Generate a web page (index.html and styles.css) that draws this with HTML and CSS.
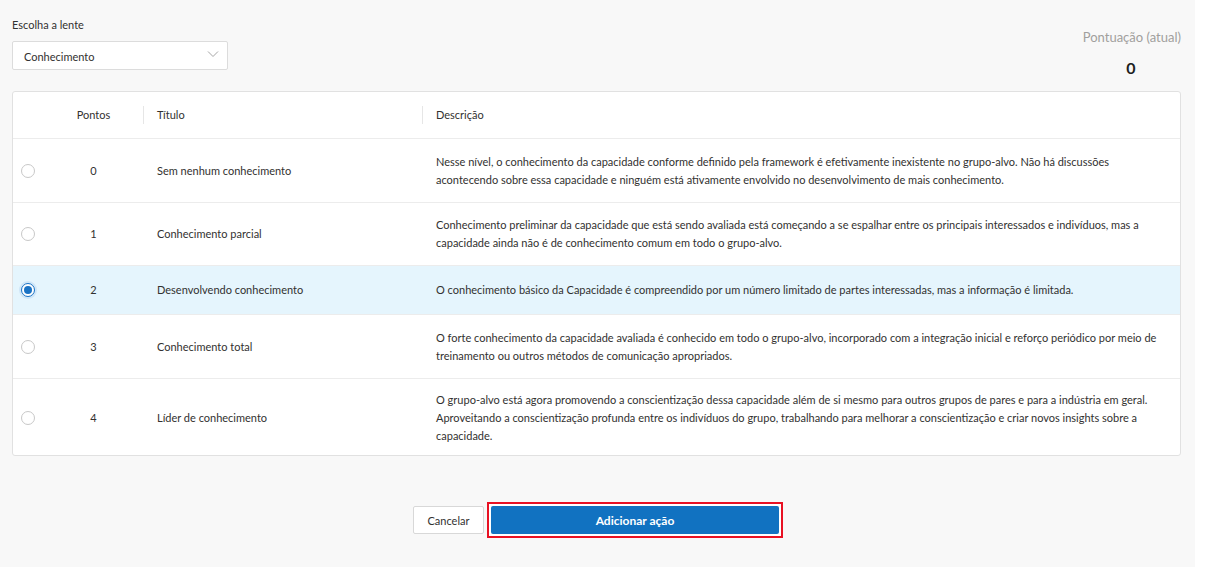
FILE: index.html
```html
<!DOCTYPE html>
<html>
<head>
	<meta charset="utf-8">
	<title>Escolha a lente</title>
	<link rel="stylesheet" href="styles.css">
</head>
<body>
	<div class="page">
		<div class="top">
			<div class="lens">
				<div class="lensLabel">Escolha a lente</div>
				<div class="select">
					<span>Conhecimento</span>
					<svg class="chev" width="12" height="8" viewBox="0 0 12 8"><path d="M1 1.5 L6 6.5 L11 1.5" fill="none" stroke="#a6a6a6" stroke-width="1"/></svg>
				</div>
			</div>
			<div class="score">
				<div class="scoreLabel">Pontuação (atual)</div>
				<div class="scoreValue">0</div>
			</div>
		</div>

		<div class="card">
			<table class="grid">
				<thead>
					<tr>
						<th class="colRadio"></th>
						<th class="colPts">Pontos</th>
						<th class="colTitle sep">Título</th>
						<th class="colDesc sep">Descrição</th>
					</tr>
				</thead>
				<tbody>
					<tr>
						<td class="colRadio"><span class="radio"></span></td>
						<td class="colPts">0</td>
						<td class="colTitle">Sem nenhum conhecimento</td>
						<td class="colDesc">Nesse nível, o conhecimento da capacidade conforme definido pela framework é efetivamente inexistente no grupo-alvo. Não há discussões<br>acontecendo sobre essa capacidade e ninguém está ativamente envolvido no desenvolvimento de mais conhecimento.</td>
					</tr>
					<tr class="r1">
						<td class="colRadio"><span class="radio"></span></td>
						<td class="colPts">1</td>
						<td class="colTitle">Conhecimento parcial</td>
						<td class="colDesc">Conhecimento preliminar da capacidade que está sendo avaliada está começando a se espalhar entre os principais interessados e indivíduos, mas a<br>capacidade ainda não é de conhecimento comum em todo o grupo-alvo.</td>
					</tr>
					<tr class="selected">
						<td class="colRadio"><span class="radio on"></span></td>
						<td class="colPts">2</td>
						<td class="colTitle">Desenvolvendo conhecimento</td>
						<td class="colDesc">O conhecimento básico da Capacidade é compreendido por um número limitado de partes interessadas, mas a informação é limitada.</td>
					</tr>
					<tr>
						<td class="colRadio"><span class="radio"></span></td>
						<td class="colPts">3</td>
						<td class="colTitle">Conhecimento total</td>
						<td class="colDesc">O forte conhecimento da capacidade avaliada é conhecido em todo o grupo-alvo, incorporado com a integração inicial e reforço periódico por meio de<br>treinamento ou outros métodos de comunicação apropriados.</td>
					</tr>
					<tr class="last">
						<td class="colRadio"><span class="radio"></span></td>
						<td class="colPts">4</td>
						<td class="colTitle">Líder de conhecimento</td>
						<td class="colDesc">O grupo-alvo está agora promovendo a conscientização dessa capacidade além de si mesmo para outros grupos de pares e para a indústria em geral.<br>Aproveitando a conscientização profunda entre os indivíduos do grupo, trabalhando para melhorar a conscientização e criar novos insights sobre a<br>capacidade.</td>
					</tr>
				</tbody>
			</table>
		</div>

		<div class="actions">
			<button class="btn cancel">Cancelar</button>
			<div class="highlight">
				<button class="btn primary">Adicionar ação</button>
			</div>
		</div>
	</div>
</body>
</html>
```

FILE: styles.css
```css
html, body {
	margin: 0;
	padding: 0;
	background: #fff;
}
body {
	font-family: Lato, "Open Sans", sans-serif;
	font-size: 11px;
	color: #323130;
}
.page {
	width: 1195px;
	height: 567px;
	background: #f8f8f8;
	padding: 0 14px 0 12px;
	box-sizing: border-box;
}
.top {
	display: flex;
	justify-content: space-between;
	align-items: flex-start;
	height: 91px;
}
.lensLabel {
	padding-top: 17px;
	line-height: 16px;
	height: 24px;
}
.select {
	display: flex;
	align-items: center;
	justify-content: space-between;
	width: 216px;
	height: 29px;
	box-sizing: border-box;
	padding: 1px 8px 0 11px;
	background: #fff;
	border: 1px solid #dcdcdc;
	border-radius: 2px;
}
.chev {
	margin-top: -4px;
}
.score {
	text-align: center;
	padding-top: 28px;
}
.scoreLabel {
	color: #a19f9d;
	font-size: 13px;
	line-height: 18px;
}
.scoreValue {
	margin-top: 12px;
	padding-right: 2px;
	font-size: 16px;
	font-weight: 700;
	line-height: 20px;
	color: #201f1e;
}
.card {
	background: #fff;
	border: 1px solid #e1e1e1;
	border-radius: 3px;
	height: 365px;
	box-sizing: border-box;
	overflow: hidden;
}
.grid {
	width: 100%;
	border-collapse: collapse;
	table-layout: fixed;
}
.grid th {
	height: 45px;
	line-height: 16px;
	padding: 0 0 1px;
	font-weight: normal;
	text-align: left;
	position: relative;
	border-bottom: 1px solid #ececec;
}
.grid th.sep::before {
	content: "";
	position: absolute;
	left: 0;
	top: 14px;
	bottom: 14px;
	width: 1px;
	background: #e6e6e6;
}
.grid td {
	border-bottom: 1px solid #ececec;
	vertical-align: middle;
	line-height: 18px;
}
.grid tr.last td {
	border-bottom: none;
}
.colRadio {
	width: 31px;
	padding: 0;
}
.grid .colPts {
	width: 99px;
	padding: 0;
	text-align: center;
}
.grid .colTitle {
	width: 265px;
	padding-left: 14px;
}
.grid .colDesc {
	padding-left: 14px;
}
tbody tr {
	height: 64px;
}
tbody tr.r1 {
	height: 63px;
}
tbody tr.selected {
	height: 49px;
	background: #e5f5fd;
}
tbody tr.last {
	height: 78px;
}
.radio {
	display: block;
	margin-left: 8px;
	width: 14px;
	height: 14px;
	box-sizing: border-box;
	border: 1px solid #c8c8c8;
	border-radius: 50%;
	background: #fff;
}
.radio.on {
	border: 1px solid #1a73c4;
	box-shadow: 0 0 0 2px #cfe6f8;
	position: relative;
}
.radio.on::after {
	content: "";
	position: absolute;
	left: 2px;
	top: 2px;
	width: 8px;
	height: 8px;
	border-radius: 50%;
	background: #1a73c4;
}
.actions {
	display: flex;
	justify-content: center;
	align-items: center;
	gap: 2px;
	padding-top: 46px;
	padding-left: 3px;
}
.btn {
	font-family: inherit;
	font-size: 11px;
	height: 28px;
	border-radius: 2px;
	cursor: pointer;
}
.cancel {
	width: 71px;
	background: #fff;
	border: 1px solid #d8d8d8;
	color: #323130;
	margin-right: 1px;
}
.highlight {
	border: 2px solid #e81123;
	padding: 2px;
	background: #fff;
	display: flex;
}
.primary {
	width: 288px;
	background: #1172c1;
	border: none;
	color: #fff;
	font-size: 12px;
	font-weight: 700;
}
```
